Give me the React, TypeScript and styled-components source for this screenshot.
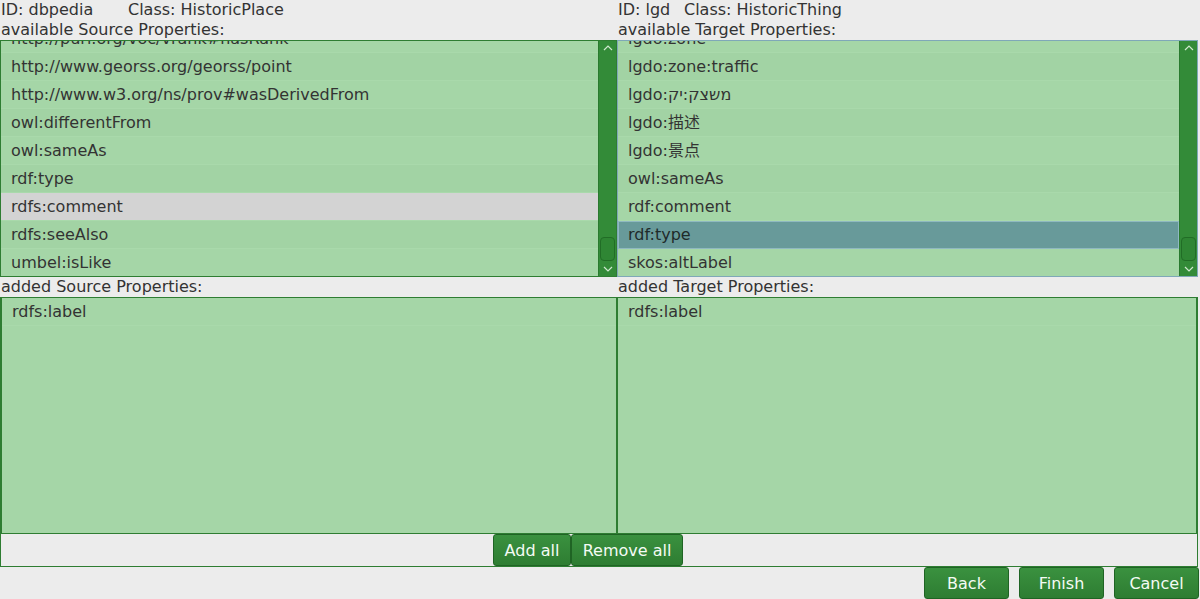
import React from "react";
import styled, { createGlobalStyle } from "styled-components";

const Global = createGlobalStyle`
  html, body { margin: 0; padding: 0; background: #ececec; }
  body { font-family: "DejaVu Sans", "Noto Sans CJK SC", sans-serif; font-size: 16px; color: #333; }
  * { box-sizing: border-box; }
`;

const Page = styled.div`
  width: 1200px;
  height: 599px;
  overflow: hidden;
  display: flex;
  flex-direction: column;
`;

const TopGrid = styled.div`
  display: grid;
  grid-template-columns: 617px 581px;
`;

const Column = styled.div`
  display: flex;
  flex-direction: column;
`;

const InfoLine = styled.div`
  display: flex;
  height: 20px;
  line-height: 20px;
  padding-left: 1px;
`;

const InfoItem = styled.span<{ $w?: number }>`
  width: ${(p) => (p.$w ? `${p.$w}px` : "auto")};
  white-space: nowrap;
`;

const Caption = styled.div`
  height: 20px;
  line-height: 20px;
  padding-left: 1px;
  white-space: nowrap;
`;

const ListBox = styled.div<{ $focused?: boolean }>`
  height: 237px;
  border: 1px solid ${(p) => (p.$focused ? "#7fa8b8" : "#2e7d32")};
  display: flex;
  background: #a5d6a7;
  overflow: hidden;
`;

const Viewport = styled.div`
  flex: 1;
  overflow: hidden;
  min-width: 0;
`;

const Rows = styled.div<{ $offset: number }>`
  margin-top: ${(p) => -p.$offset}px;
`;

const Row = styled.div<{ $odd?: boolean; $sel?: "gray" | "focus" }>`
  height: 28px;
  line-height: 20px;
  display: flex;
  align-items: center;
  padding-left: ${(p) => (p.$sel === "focus" ? "9px" : "10px")};
  white-space: nowrap;
  background: ${(p) =>
    p.$sel === "gray" ? "#d3d3d3" : p.$sel === "focus" ? "#689a9a" : p.$odd ? "#a2d3a4" : "#a5d6a7"};
  border: ${(p) => (p.$sel === "focus" ? "1px solid #8fb9c0" : "none")};
  border-bottom: ${(p) => (p.$sel === "focus" ? "1px solid #8fb9c0" : "1px solid #a9d9ab")};
  color: ${(p) => (p.$sel === "focus" ? "#1f2a2a" : "#333")};
`;

const ScrollBar = styled.div`
  width: 18px;
  background: #338b38;
  border-left: 1px solid #2a7a2f;
  display: flex;
  flex-direction: column;
`;

const Arrow = styled.div`
  height: 14px;
  display: flex;
  align-items: center;
  justify-content: center;
`;

const Track = styled.div`
  flex: 1;
  display: flex;
  flex-direction: column;
  justify-content: flex-end;
  padding: 0 1px 1px 1px;
`;

const Thumb = styled.div`
  height: 24px;
  border: 1px solid #216d26;
  border-radius: 4px;
  background: #2f8634;
`;

const AddedLabels = styled.div`
  display: grid;
  grid-template-columns: 617px 581px;
  height: 20px;
`;

const AddedBox = styled.div`
  width: 1198px;
  border: 1px solid #2e7d32;
  border-top: none;
  display: flex;
  flex-direction: column;
`;

const AddedGrid = styled.div`
  display: grid;
  grid-template-columns: 616px 580px;
`;

const AddedList = styled.div<{ $thick?: boolean }>`
  height: 237px;
  background: #a5d6a7;
  border: 1px solid #2e7d32;
  border-left-width: ${(p) => (p.$thick ? "2px" : "1px")};
  margin-left: ${(p) => (p.$thick ? "-1px" : "0")};
  overflow: hidden;
`;

const ButtonBar = styled.div`
  height: 32px;
  display: flex;
  justify-content: center;
  padding-right: 22px;
`;

const Button = styled.button<{ $w?: number }>`
  font-family: "DejaVu Sans", sans-serif;
  font-size: 16px;
  color: #f4fbf4;
  height: 32px;
  width: ${(p) => (p.$w ? `${p.$w}px` : "auto")};
  padding: 0 6px;
  background: linear-gradient(#3a913f, #2e7d32);
  border: 1px solid #1f6424;
  border-radius: 3px;
  cursor: pointer;
  white-space: nowrap;
`;

const Footer = styled.div`
  display: flex;
  justify-content: flex-end;
  gap: 10px;
  padding-right: 1px;
`;

const Up = () => (
  <svg width="10" height="6" viewBox="0 0 10 6">
    <polyline points="1,5 5,1 9,5" fill="none" stroke="#cfe8cf" strokeWidth="1.2" />
  </svg>
);
const Down = () => (
  <svg width="10" height="6" viewBox="0 0 10 6">
    <polyline points="1,1 5,5 9,1" fill="none" stroke="#cfe8cf" strokeWidth="1.2" />
  </svg>
);

const Scroll = () => (
  <ScrollBar>
    <Arrow>
      <Up />
    </Arrow>
    <Track>
      <Thumb />
    </Track>
    <Arrow>
      <Down />
    </Arrow>
  </ScrollBar>
);

type Item = { text: string; sel?: "gray" | "focus" };

const List = ({ items, focused }: { items: Item[]; focused?: boolean }) => (
  <ListBox $focused={focused}>
    <Viewport>
      <Rows $offset={16}>
        {items.map((it, i) => (
          <Row key={i} $odd={i % 2 === 1} $sel={it.sel}>
            {it.text}
          </Row>
        ))}
      </Rows>
    </Viewport>
    <Scroll />
  </ListBox>
);

const sourceItems: Item[] = [
  { text: "http://purl.org/voc/vrank#hasRank" },
  { text: "http://www.georss.org/georss/point" },
  { text: "http://www.w3.org/ns/prov#wasDerivedFrom" },
  { text: "owl:differentFrom" },
  { text: "owl:sameAs" },
  { text: "rdf:type" },
  { text: "rdfs:comment", sel: "gray" },
  { text: "rdfs:seeAlso" },
  { text: "umbel:isLike" },
];

const targetItems: Item[] = [
  { text: "lgdo:zone" },
  { text: "lgdo:zone:traffic" },
  { text: "lgdo:משצק:יק" },
  { text: "lgdo:描述" },
  { text: "lgdo:景点" },
  { text: "owl:sameAs" },
  { text: "rdf:comment" },
  { text: "rdf:type", sel: "focus" },
  { text: "skos:altLabel" },
];

export default function App() {
  return (
    <Page>
      <Global />
      <TopGrid>
        <Column>
          <InfoLine>
            <InfoItem $w={127}>ID: dbpedia</InfoItem>
            <InfoItem>Class: HistoricPlace</InfoItem>
          </InfoLine>
          <Caption>available Source Properties:</Caption>
          <List items={sourceItems} />
        </Column>
        <Column>
          <InfoLine>
            <InfoItem $w={66}>ID: lgd</InfoItem>
            <InfoItem>Class: HistoricThing</InfoItem>
          </InfoLine>
          <Caption>available Target Properties:</Caption>
          <List items={targetItems} focused />
        </Column>
      </TopGrid>
      <AddedLabels>
        <Caption>added Source Properties:</Caption>
        <Caption>added Target Properties:</Caption>
      </AddedLabels>
      <AddedBox>
        <AddedGrid>
          <AddedList>
            <Row>rdfs:label</Row>
          </AddedList>
          <AddedList $thick>
            <Row>rdfs:label</Row>
          </AddedList>
        </AddedGrid>
        <ButtonBar>
          <Button $w={78}>Add all</Button>
          <Button $w={112}>Remove all</Button>
        </ButtonBar>
      </AddedBox>
      <Footer>
        <Button $w={85}>Back</Button>
        <Button $w={85}>Finish</Button>
        <Button $w={85}>Cancel</Button>
      </Footer>
    </Page>
  );
}
